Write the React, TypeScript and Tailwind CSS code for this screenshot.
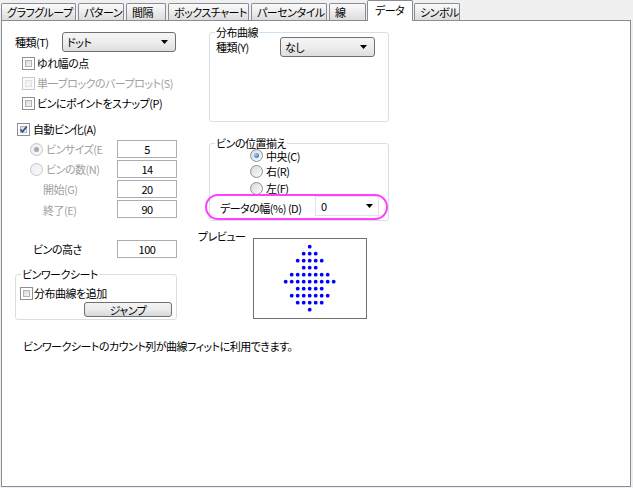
import type { ReactNode } from "react";

const TABS = [
  { label: "グラフグループ", w: "w-[75px]" },
  { label: "パターン", w: "w-[46px]" },
  { label: "間隔", w: "w-[40px]" },
  { label: "ボックスチャート", w: "w-[81px]" },
  { label: "パーセンタイル", w: "w-[76px]" },
  { label: "線", w: "w-[37px]" },
  { label: "データ", w: "w-[46px]", active: true },
  { label: "シンボル", w: "w-[46px]" },
];

// dots per row in the preview, top to bottom
const DOT_ROWS = [1, 3, 5, 3, 7, 9, 5, 7, 5, 1];

function Checkbox({ checked = false, disabled = false }: { checked?: boolean; disabled?: boolean }) {
  return (
    <span
      className={`relative flex h-[13px] w-[13px] shrink-0 p-[2px] border ${
        disabled ? "border-[#c8c8c8] bg-[#fbfbfb]" : "border-[#8e8f8f] bg-white"
      }`}
    >
      <span
        className={`flex-1 border ${
          disabled
            ? "border-[#e0e0e0] bg-[#f4f4f4]"
            : "border-[#b0b4ba] bg-gradient-to-br from-[#d4d8dd] to-[#f7f7f7]"
        }`}
      />
      {checked && (
        <svg className="absolute left-[1px] top-[1px]" width="9" height="9" viewBox="0 0 9 9">
          <path d="M1.5 4.5 L3.5 6.8 L7.8 1.5" fill="none" stroke="#2a4c8c" strokeWidth="1.7" />
        </svg>
      )}
    </span>
  );
}

function Radio({ checked = false, disabled = false }: { checked?: boolean; disabled?: boolean }) {
  return (
    <span
      className={`flex h-[13px] w-[13px] shrink-0 items-center justify-center rounded-full border ${
        disabled
          ? "border-[#c6c6c6] bg-gradient-to-br from-[#ececec] to-[#fafafa]"
          : "border-[#8e8f8f] bg-gradient-to-br from-[#d6d9dd] to-[#fbfbfb]"
      }`}
    >
      {checked && (
        <span
          className={`h-[5px] w-[5px] rounded-full ${
            disabled
              ? "bg-[#a8a8a8]"
              : "bg-[radial-gradient(circle_at_35%_35%,#8fd3ff,#1b62ad)]"
          }`}
        />
      )}
    </span>
  );
}

function Arrow() {
  return (
    <svg width="7" height="4" viewBox="0 0 7 4" className="shrink-0">
      <path d="M0 0h7L3.5 4z" fill="#000" />
    </svg>
  );
}

function Select({ value, className }: { value: string; className: string }) {
  return (
    <div
      className={`flex h-[20px] items-center justify-between rounded-[3px] border border-[#707070] bg-gradient-to-b from-[#f6f6f6] via-[#ededed] to-[#dedede] pl-[4px] pr-[7px] ${className}`}
    >
      <span>{value}</span>
      <Arrow />
    </div>
  );
}

function Field({ value }: { value: string }) {
  return (
    <div className="flex h-[18px] w-[60px] items-center justify-center border border-[#abadb3] bg-white">
      {value}
    </div>
  );
}

function GroupBox({
  label,
  className,
  children,
}: {
  label: string;
  className: string;
  children: ReactNode;
}) {
  return (
    <div className={`relative rounded-[3px] border border-[#d5dfe5] ${className}`}>
      <span className="absolute left-[5px] -top-[7px] bg-white px-[1px] leading-[12px]">{label}</span>
      {children}
    </div>
  );
}

function LeftColumn() {
  return (
    <div className="flex w-[163px] flex-col">
      <div className="mt-[11px] flex h-[20px] items-center">
        <span className="w-[47px]">種類(T)</span>
        <Select value="ドット" className="w-[114px]" />
      </div>

      <div className="mt-[1px] flex h-[20px] items-center gap-[2px] pl-[7px]">
        <Checkbox />
        ゆれ幅の点
      </div>
      <div className="flex h-[20px] items-center gap-[2px] pl-[7px] text-[#a0a0a0]">
        <Checkbox disabled />
        単一ブロックのバープロット(S)
      </div>
      <div className="flex h-[20px] items-center gap-[2px] pl-[7px]">
        <Checkbox />
        ビンにポイントをスナップ(P)
      </div>

      <div className="mt-[6px] flex h-[20px] items-center gap-[3px] pl-[2px]">
        <Checkbox checked />
        自動ビン化(A)
      </div>

      <div className="flex h-[20px] items-center">
        <div className="flex w-[102px] items-center pl-[15px] text-[#a0a0a0]">
          <Radio checked disabled />
          <span className="ml-[3px]">ビンサイズ(E</span>
        </div>
        <Field value="5" />
      </div>
      <div className="flex h-[20px] items-center">
        <div className="flex w-[102px] items-center pl-[15px] text-[#a0a0a0]">
          <Radio disabled />
          <span className="ml-[3px]">ビンの数(N)</span>
        </div>
        <Field value="14" />
      </div>
      <div className="flex h-[20px] items-center">
        <span className="w-[102px] pl-[28px] text-[#a0a0a0]">開始(G)</span>
        <Field value="20" />
      </div>
      <div className="flex h-[20px] items-center">
        <span className="w-[102px] pl-[28px] pt-[2px] text-[#a0a0a0]">終了(E)</span>
        <Field value="90" />
      </div>

      <div className="mt-[20px] flex h-[20px] items-center">
        <span className="w-[102px] pl-[18px]">ビンの高さ</span>
        <Field value="100" />
      </div>

      <GroupBox label="ビンワークシート" className="mt-[15px] h-[46px] w-[162px] pl-[4px] pt-[11px]">
        <div className="flex h-[14px] items-center gap-[1px]">
          <Checkbox />
          分布曲線を追加
        </div>
        <button className="ml-[64px] mt-[2px] flex h-[15px] w-[88px] items-center justify-center rounded-[3px] border border-[#707070] bg-gradient-to-b from-[#f4f4f4] via-[#ebebeb] to-[#d8d8d8] leading-[12px]">
          ジャンプ
        </button>
      </GroupBox>
    </div>
  );
}

function Preview() {
  return (
    <div className="h-[81px] w-[114px] border border-[#707070] bg-white">
      <svg width="112" height="79" viewBox="0 0 112 79">
        {DOT_ROWS.map((n, i) =>
          Array.from({ length: n }, (_, j) => (
            <circle
              key={`${i}-${j}`}
              cx={55.7 + (j - (n - 1) / 2) * 6}
              cy={7.7 + i * 7}
              r={1.9}
              fill="#0000ff"
            />
          )),
        )}
      </svg>
    </div>
  );
}

function RightColumn() {
  return (
    <div className="ml-[20px] flex w-[191px] flex-col">
      <GroupBox label="分布曲線" className="ml-[11px] mt-[11px] h-[90px] w-[180px] pl-[6px] pt-[4px]">
        <div className="flex h-[20px] items-center">
          <span className="w-[64px]">種類(Y)</span>
          <Select value="なし" className="w-[95px]" />
        </div>
      </GroupBox>

      <GroupBox label="ビンの位置揃え" className="ml-[11px] mt-[21px] h-[78px] w-[180px] pt-[4px] leading-[12px]">
        <div className="flex h-[15px] items-center gap-[3px] pl-[40px]">
          <Radio checked />
          中央(C)
        </div>
        <div className="flex h-[16px] items-center gap-[3px] pl-[40px]">
          <Radio />
          右(R)
        </div>
        <div className="mt-[1px] flex h-[16px] items-center gap-[3px] pl-[40px]">
          <Radio />
          左(F)
        </div>
        <div className="flex h-[20px] items-center pl-[10px]">
          <span className="w-[95px] pt-[3px]">データの幅(%) (D)</span>
          <div className="flex h-[20px] w-[64px] items-center justify-between border border-[#e3e3e3] bg-white pl-[5px] pr-[5px]">
            <span>0</span>
            <Arrow />
          </div>
        </div>
      </GroupBox>

      <div className="mt-[17px] flex items-start">
        <span className="-mt-[9px] w-[55px] leading-[14px]">プレビュー</span>
        <Preview />
      </div>
    </div>
  );
}

export default function App() {
  return (
    <div className="h-[488px] w-[633px] whitespace-nowrap bg-[#f0f0f0] text-[11px] leading-[14px] tracking-[-0.5px] text-black [font-family:'Noto_Sans_CJK_JP',sans-serif] [font-feature-settings:'palt']">
      <div className="flex h-[20px] items-end gap-[2px] pl-[1px]">
        {TABS.map((t) =>
          t.active ? (
            <div
              key={t.label}
              className={`relative z-10 -mx-[1px] -mb-[1px] h-[21px] rounded-t-[2px] border border-b-0 border-[#898c95] bg-white pl-[7px] pt-[2px] ${t.w}`}
            >
              {t.label}
            </div>
          ) : (
            <div
              key={t.label}
              className={`h-[17px] overflow-hidden rounded-t-[2px] border border-b-0 border-[#898c95] bg-gradient-to-b from-[#fafafa] via-[#ececec] to-[#dcdcdc] pl-[5px] pt-[1px] ${t.w}`}
            >
              {t.label}
            </div>
          ),
        )}
      </div>

      <div className="relative ml-[1px] h-[467px] w-[630px] border border-[#898c95] bg-white">
        <div className="flex pl-[13px]">
          <LeftColumn />
          <RightColumn />
        </div>
        <p className="mt-[19px] pl-[21px]">ビンワークシートのカウント列が曲線フィットに利用できます。</p>

        {/* pink highlight drawn over the data-width row */}
        <div className="pointer-events-none absolute left-[203px] top-[173px] h-[26px] w-[183px] rounded-full border-2 border-[#ff40ff]" />
      </div>
    </div>
  );
}
